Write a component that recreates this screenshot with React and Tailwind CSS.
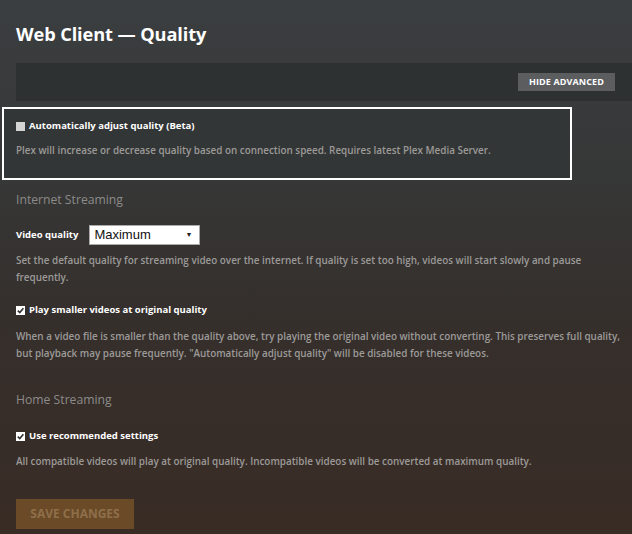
import { useState } from "react";

function Check({ checked }) {
  return (
    <span
      className={`inline-flex items-center justify-center w-[9px] h-[9px] shrink-0 ${
        checked ? "bg-white" : "bg-[#d4d4d4]"
      }`}
    >
      {checked && (
        <svg viewBox="0 0 10 10" className="w-[9px] h-[9px]">
          <path d="M2 5.2 L4.2 7.3 L8.2 2.4" fill="none" stroke="#333" strokeWidth="1.8" />
        </svg>
      )}
    </span>
  );
}

function Option({ checked, label }) {
  return (
    <div className="flex items-center gap-[4px] h-[12px]">
      <Check checked={checked} />
      <span className="text-[9.5px] font-bold text-white leading-[12px]">{label}</span>
    </div>
  );
}

function Help({ children, className = "" }) {
  return (
    <p className={`text-[9.9px] font-semibold text-[#9c9a98] leading-[17px] ${className}`}>{children}</p>
  );
}

export default function App() {
  const [quality] = useState("Maximum");

  return (
    <div
      className="w-[632px] h-[534px] overflow-hidden bg-[linear-gradient(180deg,#3b3e40_0%,#363838_30%,#352f2c_60%,#392c25_100%)]"
      style={{ fontFamily: '"Open Sans", "Noto Sans", sans-serif' }}
    >
      <h1 className="pl-4 pt-[22px] text-[18.2px] font-bold text-white leading-[24px] tracking-[-0.1px]">
        Web Client — Quality
      </h1>

      {/* advanced bar */}
      <div className="ml-4 mt-[17px] h-[38px] bg-[#2e3131] flex items-center justify-end pr-[17px]">
        <button className="h-[18px] w-[97px] bg-[#5b5d5f] text-white text-[9px] font-bold tracking-[0.1px]">
          HIDE ADVANCED
        </button>
      </div>

      {/* auto quality */}
      <div className="ml-[2px] mt-[6px] w-[570px] h-[73px] border-2 border-white bg-[#333636] pl-[12px] pt-[11px]">
        <Option label="Automatically adjust quality (Beta)" />
        <Help className="mt-[10px]">
          Plex will increase or decrease quality based on connection speed. Requires latest Plex Media Server.
        </Help>
      </div>

      <div className="pl-4 pr-[2px]">
        <h2 className="mt-[11px] text-[12.2px] text-[#8c8b89] leading-[18px]">Internet Streaming</h2>

        <div className="mt-[16px] flex items-center gap-[11px] h-[20px]">
          <span className="text-[9.5px] font-bold text-white">Video quality</span>
          <div className="relative w-[111px] h-[20px] bg-white border border-[#aaa] flex items-center pl-[4px]">
            <span
              className="text-[13px] text-[#111] leading-[18px]"
              style={{ fontFamily: '"Liberation Sans", Arial, sans-serif' }}
            >
              {quality}
            </span>
            <span className="absolute right-[7px] top-[5px] text-[7px] text-[#222] leading-[8px]">▼</span>
          </div>
        </div>

        <Help className="mt-[7px]">
          Set the default quality for streaming video over the internet. If quality is set too high, videos will start slowly and pause frequently.
        </Help>

        <div className="mt-[18px]">
          <Option checked label="Play smaller videos at original quality" />
        </div>
        <Help className="mt-[12px]">
          When a video file is smaller than the quality above, try playing the original video without converting. This preserves full quality, but playback may pause frequently. "Automatically adjust quality" will be disabled for these videos.
        </Help>

        <h2 className="mt-[29px] text-[12.2px] text-[#8c8b89] leading-[18px]">Home Streaming</h2>

        <div className="mt-[21px]">
          <Option checked label="Use recommended settings" />
        </div>
        <Help className="mt-[11px]">
          All compatible videos will play at original quality. Incompatible videos will be converted at maximum quality.
        </Help>

        <button className="mt-[29px] w-[118px] h-[30px] bg-[#6a4a27] text-[#8f6f4a] text-[12px] font-bold">
          SAVE CHANGES
        </button>
      </div>
    </div>
  );
}
